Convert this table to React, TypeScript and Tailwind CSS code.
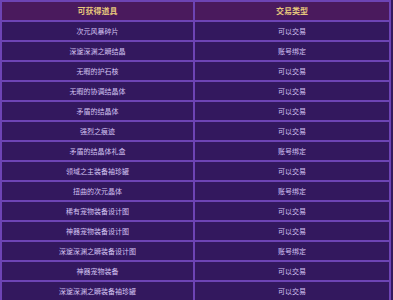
const rows: [string, string][] = [
  ['次元风暴碎片', '可以交易'],
  ['深邃深渊之瞬结晶', '账号绑定'],
  ['无暇的护石核', '可以交易'],
  ['无暇的协调结晶体', '可以交易'],
  ['矛盾的结晶体', '可以交易'],
  ['强烈之痕迹', '可以交易'],
  ['矛盾的结晶体礼盒', '账号绑定'],
  ['领域之主装备袖珍罐', '可以交易'],
  ['扭曲的次元晶体', '账号绑定'],
  ['稀有宠物装备设计图', '可以交易'],
  ['神器宠物装备设计图', '可以交易'],
  ['深邃深渊之瞬装备设计图', '账号绑定'],
  ['神器宠物装备', '可以交易'],
  ['深邃深渊之瞬装备袖珍罐', '可以交易'],
];

export default function App() {
  return (
    <div
      className="w-[393px] h-[300px] overflow-hidden bg-[#33185e] pr-[2px]"
      style={{ fontFamily: '"Noto Sans CJK SC", "Noto Sans", sans-serif' }}
    >
      <div className="border-l-2 border-r-2 border-[#6d44b4]">
        <div className="grid grid-cols-[193px_1fr] h-5 bg-[#4a1a5d] border-t-2 border-[#6d44b4] text-[#e6c77c] text-[8px] font-bold">
          <div className="flex items-center justify-center border-r-2 border-[#6d44b4]">可获得道具</div>
          <div className="flex items-center justify-center">交易类型</div>
        </div>
        {rows.map(([name, type], i) => (
          <div
            key={i}
            className="grid grid-cols-[193px_1fr] h-5 border-t-2 border-[#6d44b4] text-[#d4c3f2] text-[7px]"
          >
            <div className="flex items-center justify-center border-r-2 border-[#6d44b4]">{name}</div>
            <div className="flex items-center justify-center">{type}</div>
          </div>
        ))}
      </div>
    </div>
  );
}
